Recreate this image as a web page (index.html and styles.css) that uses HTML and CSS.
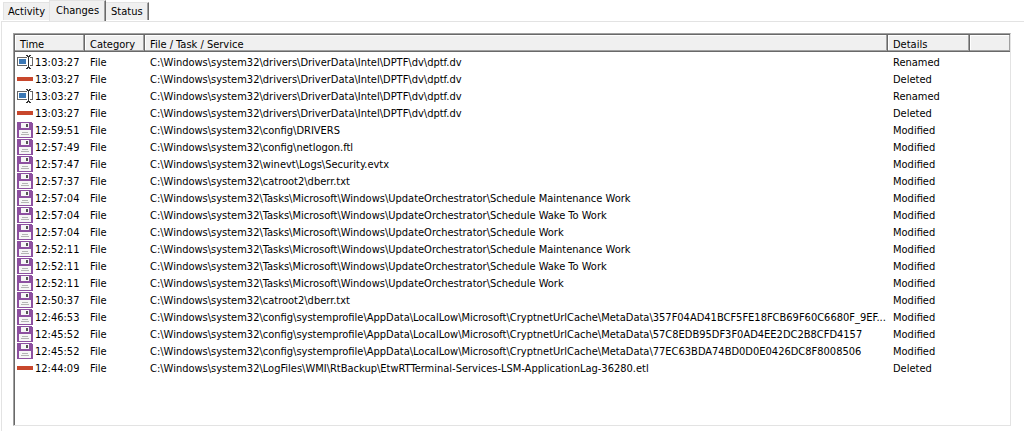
FILE: index.html
```html
<!DOCTYPE html>
<html lang="en">
<head>
<meta charset="utf-8">
<title>Changes</title>
<link rel="stylesheet" href="styles.css">
</head>
<body>
<svg class="sprite" aria-hidden="true">
  <symbol id="renamed" viewBox="0 0 16 16" shape-rendering="crispEdges">
    <path fill="#666" d="M0 3h10v1H1v7h9v1H0zM13 3h3v9h-3v-1h2V4h-2z"/>
    <path fill="#3b78b5" d="M2 5h7v5H2z"/>
    <path fill="#333" d="M9 1h2v1h1v-1h2v1h-1v1h-1v10h1v1h1v1h-2v-1h-1v1H9v-1h1v-1h1V3h-1V2H9z"/>
  </symbol>
  <symbol id="deleted" viewBox="0 0 16 16" shape-rendering="crispEdges">
    <path fill="#c8472c" d="M0 6h16v4H0z"/>
  </symbol>
  <symbol id="modified" viewBox="0 0 16 16" shape-rendering="crispEdges">
    <path fill="#8d50a0" d="M0 0h15v1h1v15H0z"/>
    <path fill="#f6f6f6" d="M4 1h8v5H4zM2 8h12v7H2z"/>
    <path fill="#555" d="M9 2h2v3H9z"/>
    <path fill="#b4b4b4" d="M5 10h6v1H5zM4 12h8v1H4z"/>
  </symbol>
</svg>
<nav class="tabs" role="tablist">
  <button class="tab" role="tab">Activity</button>
  <button class="tab selected" role="tab" aria-selected="true">Changes</button>
  <button class="tab" role="tab">Status</button>
</nav>
<main class="panel">
  <div class="list">
    <table>
      <colgroup><col class="c-time"><col class="c-cat"><col><col class="c-det"><col class="c-end"></colgroup>
      <thead><tr><th>Time</th><th>Category</th><th>File / Task / Service</th><th>Details</th><th></th></tr></thead>
      <tbody>
        <tr><td><svg class="icon"><use href="#renamed"/></svg>13:03:27</td><td>File</td><td>C:\Windows\system32\drivers\DriverData\Intel\DPTF\dv\dptf.dv</td><td>Renamed</td><td></td></tr>
        <tr><td><svg class="icon"><use href="#deleted"/></svg>13:03:27</td><td>File</td><td>C:\Windows\system32\drivers\DriverData\Intel\DPTF\dv\dptf.dv</td><td>Deleted</td><td></td></tr>
        <tr><td><svg class="icon"><use href="#renamed"/></svg>13:03:27</td><td>File</td><td>C:\Windows\system32\drivers\DriverData\Intel\DPTF\dv\dptf.dv</td><td>Renamed</td><td></td></tr>
        <tr><td><svg class="icon"><use href="#deleted"/></svg>13:03:27</td><td>File</td><td>C:\Windows\system32\drivers\DriverData\Intel\DPTF\dv\dptf.dv</td><td>Deleted</td><td></td></tr>
        <tr><td><svg class="icon"><use href="#modified"/></svg>12:59:51</td><td>File</td><td>C:\Windows\system32\config\DRIVERS</td><td>Modified</td><td></td></tr>
        <tr><td><svg class="icon"><use href="#modified"/></svg>12:57:49</td><td>File</td><td>C:\Windows\system32\config\netlogon.ftl</td><td>Modified</td><td></td></tr>
        <tr><td><svg class="icon"><use href="#modified"/></svg>12:57:47</td><td>File</td><td>C:\Windows\system32\winevt\Logs\Security.evtx</td><td>Modified</td><td></td></tr>
        <tr><td><svg class="icon"><use href="#modified"/></svg>12:57:37</td><td>File</td><td>C:\Windows\system32\catroot2\dberr.txt</td><td>Modified</td><td></td></tr>
        <tr><td><svg class="icon"><use href="#modified"/></svg>12:57:04</td><td>File</td><td>C:\Windows\system32\Tasks\Microsoft\Windows\UpdateOrchestrator\Schedule Maintenance Work</td><td>Modified</td><td></td></tr>
        <tr><td><svg class="icon"><use href="#modified"/></svg>12:57:04</td><td>File</td><td>C:\Windows\system32\Tasks\Microsoft\Windows\UpdateOrchestrator\Schedule Wake To Work</td><td>Modified</td><td></td></tr>
        <tr><td><svg class="icon"><use href="#modified"/></svg>12:57:04</td><td>File</td><td>C:\Windows\system32\Tasks\Microsoft\Windows\UpdateOrchestrator\Schedule Work</td><td>Modified</td><td></td></tr>
        <tr><td><svg class="icon"><use href="#modified"/></svg>12:52:11</td><td>File</td><td>C:\Windows\system32\Tasks\Microsoft\Windows\UpdateOrchestrator\Schedule Maintenance Work</td><td>Modified</td><td></td></tr>
        <tr><td><svg class="icon"><use href="#modified"/></svg>12:52:11</td><td>File</td><td>C:\Windows\system32\Tasks\Microsoft\Windows\UpdateOrchestrator\Schedule Wake To Work</td><td>Modified</td><td></td></tr>
        <tr><td><svg class="icon"><use href="#modified"/></svg>12:52:11</td><td>File</td><td>C:\Windows\system32\Tasks\Microsoft\Windows\UpdateOrchestrator\Schedule Work</td><td>Modified</td><td></td></tr>
        <tr><td><svg class="icon"><use href="#modified"/></svg>12:50:37</td><td>File</td><td>C:\Windows\system32\catroot2\dberr.txt</td><td>Modified</td><td></td></tr>
        <tr><td><svg class="icon"><use href="#modified"/></svg>12:46:53</td><td>File</td><td class="long">C:\Windows\system32\config\systemprofile\AppData\LocalLow\Microsoft\CryptnetUrlCache\MetaData\357F04AD41BCF5FE18FCB69F60C6680F_9EF...</td><td>Modified</td><td></td></tr>
        <tr><td><svg class="icon"><use href="#modified"/></svg>12:45:52</td><td>File</td><td>C:\Windows\system32\config\systemprofile\AppData\LocalLow\Microsoft\CryptnetUrlCache\MetaData\57C8EDB95DF3F0AD4EE2DC2B8CFD4157</td><td>Modified</td><td></td></tr>
        <tr><td><svg class="icon"><use href="#modified"/></svg>12:45:52</td><td>File</td><td>C:\Windows\system32\config\systemprofile\AppData\LocalLow\Microsoft\CryptnetUrlCache\MetaData\77EC63BDA74BD0D0E0426DC8F8008506</td><td>Modified</td><td></td></tr>
        <tr><td><svg class="icon"><use href="#deleted"/></svg>12:44:09</td><td>File</td><td>C:\Windows\system32\LogFiles\WMI\RtBackup\EtwRTTerminal-Services-LSM-ApplicationLag-36280.etl</td><td>Deleted</td><td></td></tr>
      </tbody>
    </table>
  </div>
</main>
</body>
</html>
```
FILE: styles.css
```css
* { box-sizing: border-box; }
body {
  margin: 0;
  min-height: 100vh;
  display: flex;
  flex-direction: column;
  background: #fff;
  color: #000;
  font: 11px/13px Tahoma, "DejaVu Sans Condensed", "Noto Sans", sans-serif;
}
.sprite { display: none; }
.tabs { display: flex; align-items: flex-end; padding-left: 3px; height: 21px; }
.tab {
  height: 18px;
  margin-bottom: 1px;
  padding: 0 5px;
  border: 0;
  border-top: 1px solid #e3e3e3;
  background: #f0f0f0;
  color: inherit;
  font: inherit;
}
.tab:first-child { border-left: 1px solid #e3e3e3; padding: 0 4px; }
.tab.selected { height: 21px; margin: 0; padding: 0 6px 2px; border-left: 1px solid #e3e3e3; }
.tab.selected, .tab:last-child { border-right: 1px solid #696969; box-shadow: inset -1px 0 #a0a0a0; }
.panel {
  flex: 1;
  display: flex;
  margin-left: 1px;
  padding: 11px 13px 5px 11px;
  border-top: 1px solid #e3e3e3;
  border-left: 1px solid #e3e3e3;
}
.list {
  flex: 1;
  min-width: 0;
  border: 1px solid;
  border-color: #a0a0a0 #e3e3e3 #e3e3e3 #a0a0a0;
  box-shadow: inset 1px 1px #696969;
  padding: 1px 0 0 1px;
}
table { width: 100%; table-layout: fixed; border-collapse: separate; border-spacing: 0; }
.c-time { width: 70px; }
.c-cat { width: 60px; }
.c-det { width: 82px; }
.c-end { width: 40px; }
th, td {
  overflow: hidden;
  text-align: left;
  text-overflow: ellipsis;
  white-space: nowrap;
  font-weight: normal;
}
th {
  height: 17px;
  padding: 2px 5px 0;
  background: #f0f0f0;
  border-right: 1px solid #696969;
  border-bottom: 1px solid #696969;
  box-shadow: inset -1px -1px #a0a0a0, inset 1px 1px #fff;
}
th:last-child { border-right: 0; }
td { height: 17px; padding: 0 5px; line-height: 17px; }
td:first-child { padding: 0 0 0 2px; text-overflow: clip; }
td.long { padding-right: 0; overflow: visible; }
tbody::before { content: ""; display: block; height: 2px; }
.icon { width: 16px; height: 16px; margin-right: 2px; vertical-align: top; }
```
